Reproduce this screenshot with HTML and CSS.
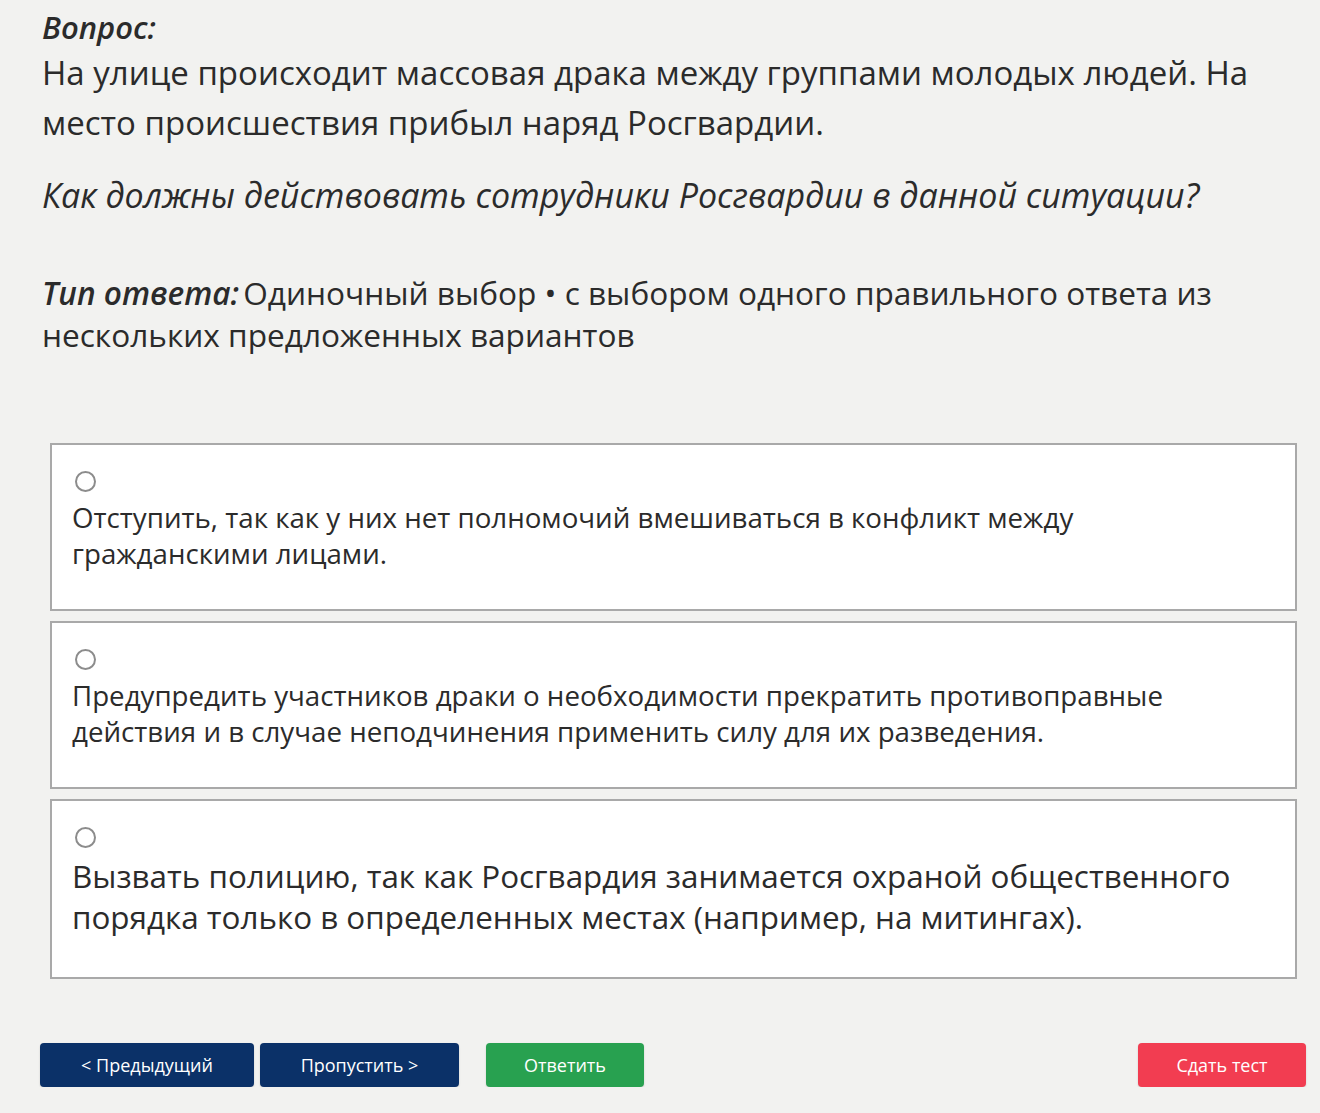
FILE: index.html
```html
<!DOCTYPE html>
<html lang="ru">
<head>
    <meta charset="UTF-8">
    <meta name="viewport" content="width=device-width, initial-scale=1.0">
    <title>Вопрос</title>
    <link rel="stylesheet" href="styles.css">
</head>
<body>
    <div class="container">
        <div class="question">
            <div class="question-label">Вопрос:</div>
            <p class="question-text">На улице происходит массовая драка между группами молодых людей. На место происшествия прибыл наряд Росгвардии.</p>
            <p class="question-ask">Как должны действовать сотрудники Росгвардии в данной ситуации?</p>
        </div>

        <p class="answer-type"><em>Тип ответа:</em> Одиночный выбор • с выбором одного правильного ответа из нескольких предложенных вариантов</p>

        <div class="options">
            <label class="option">
                <input type="radio" name="answer" value="1">
                <span>Отступить, так как у них нет полномочий вмешиваться в конфликт между гражданскими лицами.</span>
            </label>
            <label class="option">
                <input type="radio" name="answer" value="2">
                <span>Предупредить участников драки о необходимости прекратить противоправные действия и в случае неподчинения применить силу для их разведения.</span>
            </label>
            <label class="option option-large">
                <input type="radio" name="answer" value="3">
                <span>Вызвать полицию, так как Росгвардия занимается охраной общественного порядка только в определенных местах (например, на митингах).</span>
            </label>
        </div>

        <div class="buttons">
            <button class="btn btn-nav">&lt; Предыдущий</button>
            <button class="btn btn-nav btn-skip">Пропустить &gt;</button>
            <button class="btn btn-answer">Ответить</button>
            <button class="btn btn-finish">Сдать тест</button>
        </div>
    </div>
</body>
</html>
```

FILE: styles.css
```css
body {
    font-family: 'Open Sans', 'Noto Sans', sans-serif;
    background-color: #f2f2f0;
    color: #2b2b2b;
    margin: 0;
    padding: 0;
}
.container {
    padding: 8px 14px 0 42px;
}
.question-label {
    font-size: 31px;
    font-weight: 600;
    font-style: italic;
    line-height: 38px;
}
.question-text {
    font-size: 33px;
    line-height: 50px;
    margin: 2px 0 0;
}
.question-ask {
    font-size: 34px;
    font-style: italic;
    line-height: 50px;
    margin: 22px 0 0;
}
.answer-type {
    font-size: 31.6px;
    line-height: 42px;
    margin: 52px 0 0;
}
.answer-type em {
    font-weight: 600;
    margin-right: -4px;
}
.options {
    margin: 87px 9px 0 8px;
    display: flex;
    flex-direction: column;
    gap: 10px;
}
.option {
    display: block;
    background-color: #ffffff;
    border: 2px solid #a9a9a9;
    padding: 26px 20px 38px 20px;
    min-height: 100px;
    font-size: 27.7px;
    line-height: 36px;
    cursor: pointer;
}
.option input {
    appearance: none;
    display: block;
    width: 21px;
    height: 21px;
    margin: 0 0 7px 3px;
    border: 2px solid #8c8c8c;
    border-radius: 50%;
    background-color: #ffffff;
}
.option input:checked {
    border-color: #0b3168;
    box-shadow: inset 0 0 0 4px #ffffff;
    background-color: #0b3168;
}
.option span {
    display: block;
}
.option-large {
    font-size: 31.4px;
    line-height: 41px;
    padding-bottom: 40px;
}
.buttons {
    display: flex;
    align-items: center;
    margin: 64px 0 0 -2px;
}
.btn {
    height: 44px;
    border: none;
    border-radius: 4px;
    color: #ffffff;
    font-family: 'Open Sans', sans-serif;
    font-size: 18px;
    cursor: pointer;
    box-shadow: 0 1px 2px rgba(0, 0, 0, 0.15);
}
.btn-nav {
    background-color: #0b3168;
    width: 214px;
}
.btn-skip {
    width: 199px;
    margin-left: 6px;
}
.btn-answer {
    background-color: #28a150;
    width: 158px;
    margin-left: 27px;
}
.btn-finish {
    background-color: #f23d51;
    width: 168px;
    margin-left: auto;
}
```
